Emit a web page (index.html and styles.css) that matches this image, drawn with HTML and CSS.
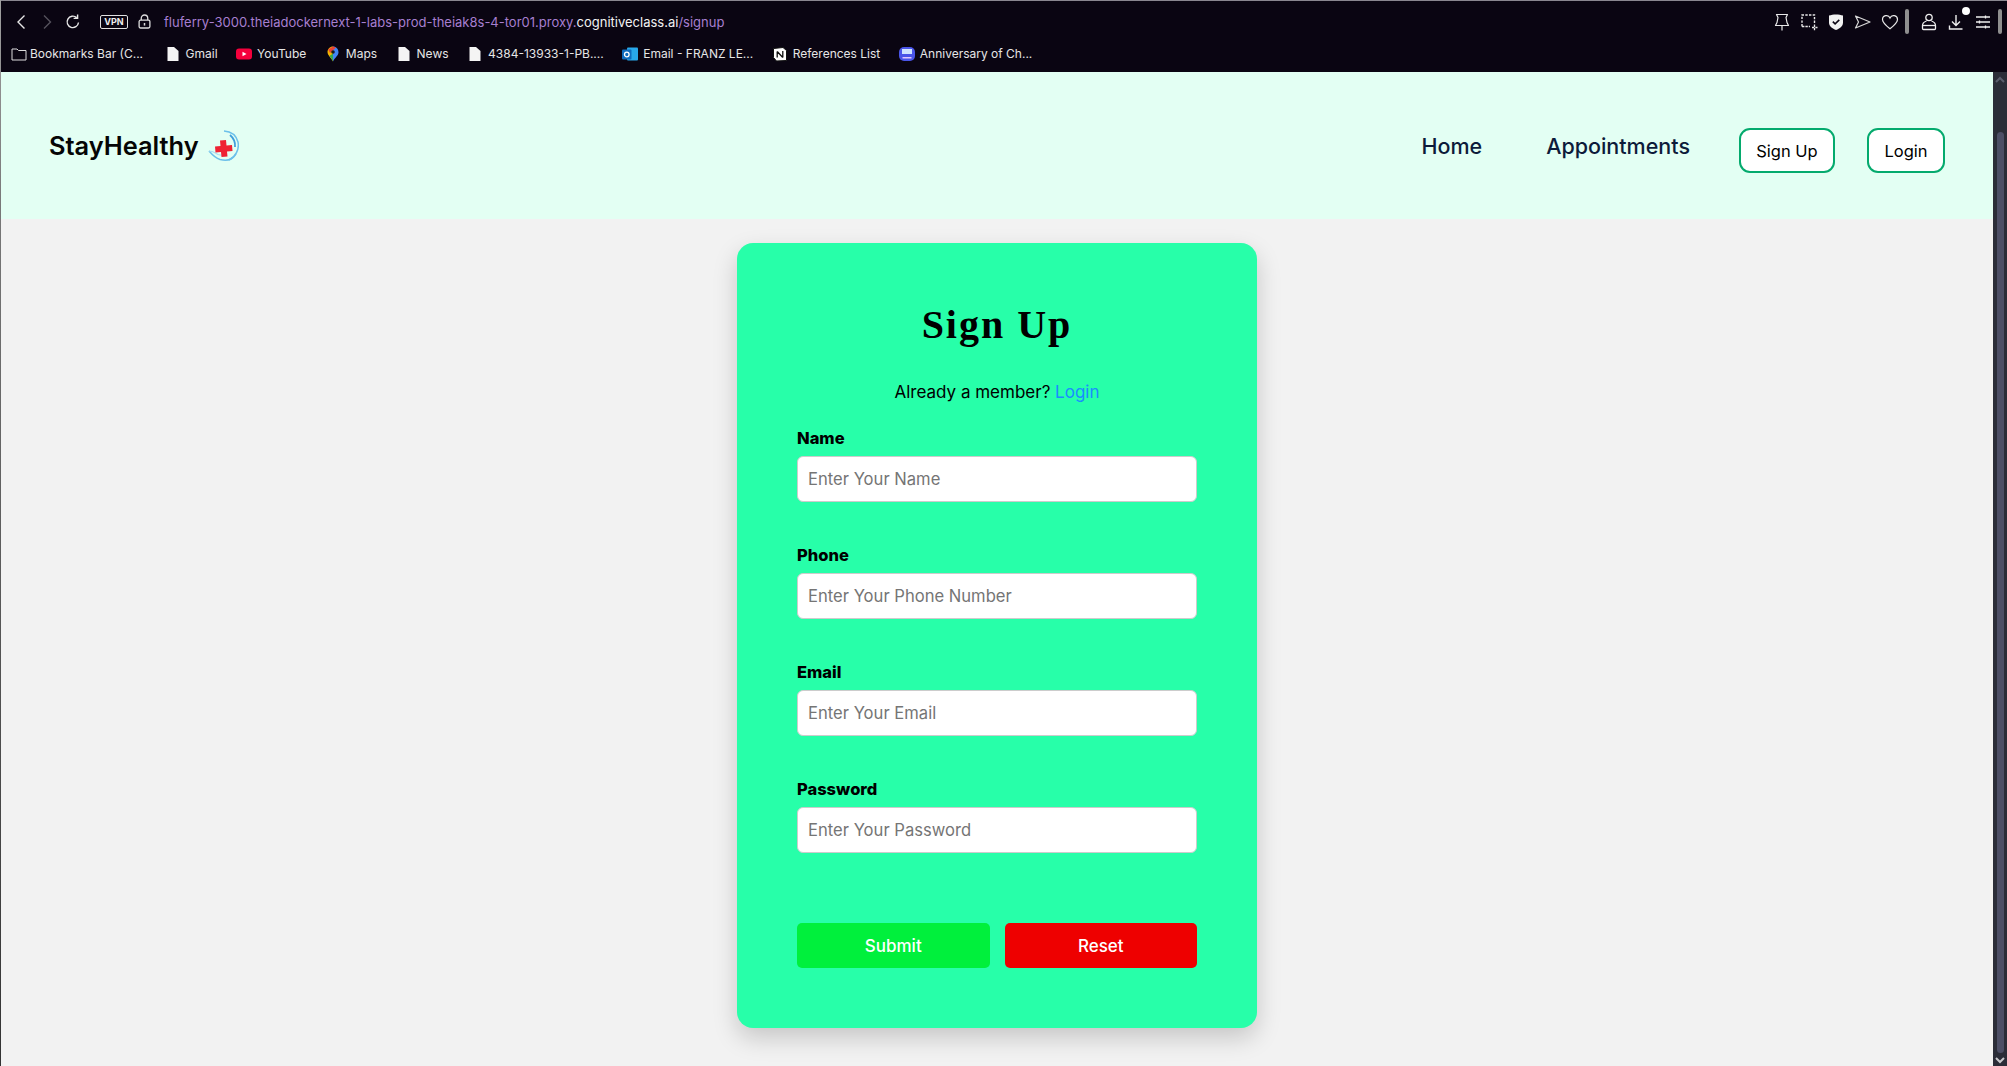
FILE: index.html
```html
<!DOCTYPE html>
<html lang="en">
<head>
    <meta charset="UTF-8">
    <meta name="viewport" content="width=device-width, initial-scale=1.0">
    <title>Sign Up - StayHealthy</title>
    <link rel="stylesheet" href="styles.css">
</head>
<body>
    <div class="browser">
        <div class="toolbar">
            <div class="tool-left">
                <svg class="tb-icon" viewBox="0 0 20 20"><path d="M13.500 3.500 7 10l6.500 6.500" fill="none" stroke="#e8e8e8" stroke-width="1.400"/></svg>
                <svg class="tb-icon" viewBox="0 0 20 20"><path d="M7 3.500 13.500 10 7 16.500" fill="none" stroke="#55525c" stroke-width="1.400"/></svg>
                <svg class="tb-icon" viewBox="0 0 20 20"><path d="M15.500 10.500A5.700 5.700 0 1 1 13.600 5.600M14.600 2.400v4h-4" fill="none" stroke="#e8e8e8" stroke-width="1.400"/></svg>
                <span class="vpn">VPN</span>
                <svg class="lock" viewBox="0 0 14 16"><path d="M3.500 6.500V4.500a3.500 3.500 0 0 1 7 0v2" fill="none" stroke="#ddd" stroke-width="1.400"/><rect x="1.200" y="6.600" width="11.600" height="8.400" rx="1.500" fill="none" stroke="#ddd" stroke-width="1.400"/><rect x="6.200" y="9.600" width="1.600" height="2.800" fill="#ddd"/></svg>
                <span class="url">fluferry-3000.theiadockernext-1-labs-prod-theiak8s-4-tor01.proxy.<b class="url-domain">cognitiveclass.ai</b>/signup</span>
            </div>
            <div class="tool-right">
                <svg class="tr-icon" viewBox="0 0 18 18"><path d="M3.500 1.500h11l-1.500 3L14 9.500l1.500 3h-13l1.500-3 1-5zM9 12.500v5" fill="none" stroke="#e8e8e8" stroke-width="1.200" stroke-linejoin="round"/></svg>
                <svg class="tr-icon" viewBox="0 0 18 18"><path d="M2 13.500V2h12.500v9" fill="none" stroke="#e8e8e8" stroke-width="1.400" stroke-dasharray="2.400 1.300"/><path d="M2 13.500h8M12 14.500h5.500M14.500 11.500v6" fill="none" stroke="#e8e8e8" stroke-width="1.300" stroke-dasharray="2.400 1"/></svg>
                <svg class="tr-icon" viewBox="0 0 18 18"><path d="M2 2.500C6 1 12 1 16 2.500v7c0 4-3.500 6-7 7.500-3.500-1.500-7-3.500-7-7.500z" fill="#f2f2f2"/><path d="m5.800 8.600 2.300 2.300 4.200-4" fill="none" stroke="#0a0512" stroke-width="1.500"/></svg>
                <svg class="tr-icon" viewBox="0 0 18 18"><path d="M1.500 3 16 9 1.500 15 4.500 9z" fill="none" stroke="#d8d8d8" stroke-width="1.200" stroke-linejoin="round"/></svg>
                <svg class="tr-icon" viewBox="0 0 18 18"><path d="M9 15.800C4 11.800 1.500 9.500 1.500 6.500A3.900 3.900 0 0 1 9 5a3.900 3.900 0 0 1 7.500 1.500c0 3-2.500 5.300-7.500 9.300z" fill="none" stroke="#e8e8e8" stroke-width="1.200"/></svg>
                <span class="tb-sep"></span>
                <svg class="tr-icon" viewBox="0 0 18 18"><circle cx="9" cy="4.500" r="3.200" fill="none" stroke="#eee" stroke-width="1.300"/><path d="M6.500 8C3.500 9 2.500 10.500 2.500 12.500v3a1 1 0 0 0 1 1h11a1 1 0 0 0 1-1v-3C15.500 10.500 14.500 9 11.500 8" fill="none" stroke="#eee" stroke-width="1.300"/><path d="M3 12.500h12" stroke="#eee" stroke-width="1.300"/></svg>
                <span class="download">
                    <svg class="tr-icon" viewBox="0 0 18 18"><path d="M9 2v10M5 8.500l4 4 4-4M2.500 12.500v3.500h13" fill="none" stroke="#eee" stroke-width="1.400"/></svg>
                    <span class="download-dot"></span>
                </span>
                <svg class="tr-icon tr-icon-last" viewBox="0 0 18 18"><path d="M2 4h14M2 9h14M2 14h14M11.500 2.400v3.200M5.500 7.400v3.200M11.500 12.400v3.200" fill="none" stroke="#eee" stroke-width="1.300"/></svg>
                <span class="tb-sep"></span>
            </div>
        </div>
        <div class="bookmarks">
            <a class="bm bm-first"><svg class="bm-icon" viewBox="0 0 16 16"><path d="M1 3h5l1.500 1.500H15v9.500H1z" fill="none" stroke="#ddd" stroke-width="1"/></svg>Bookmarks Bar (C...</a>
            <a class="bm"><svg class="bm-icon" viewBox="0 0 16 16"><path d="M2.500 1h6.500L13.500 5v10h-11z" fill="#f4f4f4"/></svg>Gmail</a>
            <a class="bm"><svg class="bm-icon" viewBox="0 0 16 16"><rect y="2.500" width="16" height="11" rx="3" fill="#f5003c"/><path d="M6.500 5.800 10.500 8l-4 2.200z" fill="#fff"/></svg>YouTube</a>
            <a class="bm"><svg class="bm-icon" viewBox="0 0 16 16"><path d="M8 .5C4.800.5 2.500 3 2.500 6c0 3.500 4 6 5.500 9.500z" fill="#f4b400"/><path d="M8 .5c3.200 0 5.500 2.500 5.500 6 0 3-4 5.500-5.500 9z" fill="#4285f4"/><path d="M3.200 3.500 8 .5l3 1-6 5.500z" fill="#ea4335"/><path d="M8 15.500C7 13 5.500 11.500 4.500 10L8 7.500z" fill="#34a853"/><circle cx="8" cy="6" r="1.800" fill="#1a1a1a"/></svg>Maps</a>
            <a class="bm"><svg class="bm-icon" viewBox="0 0 16 16"><path d="M2.500 1h6.500L13.500 5v10h-11z" fill="#f4f4f4"/></svg>News</a>
            <a class="bm"><svg class="bm-icon" viewBox="0 0 16 16"><path d="M2.500 1h6.500L13.500 5v10h-11z" fill="#f4f4f4"/></svg>4384-13933-1-PB....</a>
            <a class="bm"><svg class="bm-icon" viewBox="0 0 16 16"><rect x="5" y="1.500" width="11" height="13" rx="1" fill="#28a8ea"/><rect x="0" y="3.500" width="9.500" height="10" rx="1" fill="#0f6cbd"/><circle cx="4.800" cy="8.500" r="2.300" fill="none" stroke="#fff" stroke-width="1.300"/></svg>Email - FRANZ LE...</a>
            <a class="bm"><svg class="bm-icon" viewBox="0 0 16 16"><path d="M1.500 2.500 11 1.500l3.500 3v10l-10 .500-3-3.500z" fill="#fff" stroke="#111" stroke-width="1"/><path d="M5.200 5.500v6M5.200 5.500l5.600 6M10.800 5v6.500" fill="none" stroke="#111" stroke-width="1.300"/></svg>References List</a>
            <a class="bm"><svg class="bm-icon" viewBox="0 0 16 16"><rect y="1" width="16" height="14" rx="5" fill="#4a55e8"/><rect x="3" y="3" width="10" height="5" fill="#cfe4ff"/><rect x="3.500" y="11" width="9" height="1.500" fill="#e0c8ff"/></svg>Anniversary of Ch...</a>
        </div>
    </div>

    <div class="viewport">
        <div class="page">
            <header class="navbar">
                <div class="brand">
                    <span>StayHealthy</span>
                    <svg class="brand-logo" viewBox="0 0 31 31">
                        <path d="M16 1c7 .5 12 3.500 14 11 1.500 7.500-2.500 15-9 18" fill="none" stroke="#6cc0ea" stroke-width="1.500"/>
                        <path d="M22 5c3.500 3 5.500 7 5 12" fill="none" stroke="#3f9fdc" stroke-width="1.800"/>
                        <path d="M1 21c3 3.500 6 7 11 8.500 4 1 8 1 11-.5 2.500-1.500 4-3 5-5" fill="none" stroke="#6cc0ea" stroke-width="1.500"/>
                        <path d="M1 21c4 0 6 2 9 3.500 3 1 6 1 9 0" fill="none" stroke="#a8dcf2" stroke-width="1.200"/>
                        <path d="M12 10.500l6-.5.500 5.500 5.500-.5.500 6-5.500.5.500 5-6 .5-.5-5-5.500.5-.5-6 5.500-.5z" fill="#ee2233"/>
                    </svg>
                </div>
                <nav class="nav-menu">
                    <a class="nav-link">Home</a>
                    <a class="nav-link">Appointments</a>
                    <a class="nav-btn nav-btn-signup">Sign Up</a>
                    <a class="nav-btn nav-btn-login">Login</a>
                </nav>
            </header>

            <main class="content">
                <div class="signup-card">
                    <h1>Sign Up</h1>
                    <p class="member-note">Already a member? <a class="login-link">Login</a></p>
                    <form class="signup-form">
                        <div class="form-group">
                            <label for="name">Name</label>
                            <input id="name" type="text" placeholder="Enter Your Name">
                        </div>
                        <div class="form-group">
                            <label for="phone">Phone</label>
                            <input id="phone" type="tel" placeholder="Enter Your Phone Number">
                        </div>
                        <div class="form-group">
                            <label for="email">Email</label>
                            <input id="email" type="email" placeholder="Enter Your Email">
                        </div>
                        <div class="form-group">
                            <label for="password">Password</label>
                            <input id="password" type="password" placeholder="Enter Your Password">
                        </div>
                        <div class="btn-group">
                            <button type="button" class="btn btn-submit">Submit</button>
                            <button type="reset" class="btn btn-reset">Reset</button>
                        </div>
                    </form>
                </div>
            </main>
        </div>
        <div class="scrollbar">
            <svg class="scroll-arrow" viewBox="0 0 14 10"><path d="M3 7l4-4 4 4" fill="none" stroke="#5a5d6c" stroke-width="2"/></svg>
            <div class="scroll-thumb"></div>
            <svg class="scroll-arrow" viewBox="0 0 14 10"><path d="M3 3l4 4 4-4" fill="none" stroke="#c8c8cc" stroke-width="2"/></svg>
        </div>
    </div>
</body>
</html>
```

FILE: styles.css
```css
* {
    box-sizing: border-box;
}
html, body {
    height: 100%;
}
body {
    margin: 0;
    font-family: Inter, "Liberation Sans", sans-serif;
    background-color: #f2f2f2;
    display: flex;
    flex-direction: column;
    overflow: hidden;
    border-left: 1px solid;
    border-image: linear-gradient(#a0a0a0, #777 20%, #333) 1;
}
.browser {
    height: 72px;
    flex: none;
    background: #0a0512;
    border-top: 1px solid #8a8790;
    color: #e6e6e6;
}
.toolbar {
    height: 41px;
    display: flex;
    justify-content: space-between;
    align-items: center;
    padding: 0 5px 0 10px;
}
.tool-left, .tool-right {
    display: flex;
    align-items: center;
}
.tb-icon {
    width: 20px;
    height: 20px;
    margin-right: 6px;
}
.vpn {
    margin-left: 11px;
    font-size: 9px;
    font-weight: 700;
    line-height: 10px;
    padding: 1px 0;
    border: 1px solid #e0e0e0;
    border-radius: 2px;
    color: #eee;
    width: 28px;
    text-align: center;
}
.lock {
    width: 13px;
    height: 15px;
    margin-left: 10px;
}
.url {
    margin-left: 13px;
    font-size: 13px;
    color: #a77fd0;
}
.url-domain {
    font-weight: 400;
    color: #f2f2f2;
}
.tr-icon {
    width: 18px;
    height: 18px;
    margin-right: 9px;
    display: block;
}
.tr-icon-last {
    margin-right: 6px;
}
.tb-sep {
    width: 4px;
    height: 25px;
    background: #8f8f8f;
    border-radius: 2px;
    margin: 0 11px 0 -3px;
}
.tool-right .tb-sep:last-child {
    margin: 0;
}
.download {
    position: relative;
}
.download-dot {
    position: absolute;
    top: -6px;
    right: 4px;
    width: 8px;
    height: 8px;
    border-radius: 50%;
    background: #fff;
}
.bookmarks {
    height: 30px;
    display: flex;
    align-items: flex-start;
    padding: 2px 0 0 10px;
    font-size: 12px;
    gap: 18.500px;
}
.bm {
    display: flex;
    align-items: center;
    gap: 5px;
    white-space: nowrap;
    line-height: 20px;
}
.bm-first {
    gap: 3px;
    margin-right: 3px;
}
.bm-icon {
    width: 16px;
    height: 16px;
}
.viewport {
    flex: 1;
    display: flex;
    min-height: 0;
}
.page {
    flex: 1;
    min-width: 0;
}
.scrollbar {
    width: 14px;
    background: #2b2d38;
    display: flex;
    flex-direction: column;
    justify-content: space-between;
    padding: 3px 0 1px;
    position: relative;
}
.scroll-arrow {
    width: 14px;
    height: 10px;
    display: block;
}
.scroll-thumb {
    position: absolute;
    top: 60px;
    left: 4px;
    width: 7px;
    height: 921px;
    background: #4d4f66;
    border-radius: 4px;
}

/* navbar */
.navbar {
    height: 147px;
    background: #e3fff3;
    display: flex;
    justify-content: space-between;
    align-items: center;
    padding: 0 48px 0 48px;
}
.brand {
    display: flex;
    align-items: center;
    gap: 9px;
    font-size: 25.400px;
    font-weight: 600;
    color: #050505;
}
.brand-logo {
    width: 31px;
    height: 31px;
}
.nav-menu {
    display: flex;
    align-items: center;
}
.nav-link {
    font-size: 21.500px;
    font-weight: 500;
    color: #0d1b3a;
    margin-right: 64px;
}
.nav-link:nth-child(2) {
    margin-right: 49px;
}
.nav-btn {
    height: 45px;
    border: 2px solid #04aa6d;
    border-radius: 11px;
    background: #fff;
    color: #000;
    font-size: 16.500px;
    display: flex;
    align-items: center;
    justify-content: center;
    margin-top: 10px;
}
.nav-btn-signup {
    width: 96px;
    margin-right: 32px;
}
.nav-btn-login {
    width: 78px;
}

/* card */
.content {
    display: flex;
    justify-content: center;
    padding-top: 24px;
}
.signup-card {
    width: 520px;
    height: 785px;
    background: #27ffa9;
    border-radius: 16px;
    padding: 59px 60px 60px;
    box-shadow: 0 10px 24px rgba(0, 0, 0, 0.18);
}
h1 {
    margin: 0 0 32px;
    font-family: "Liberation Serif", serif;
    font-size: 40px;
    font-weight: 700;
    line-height: 46px;
    letter-spacing: 2px;
    text-align: center;
    color: #000;
}
.member-note {
    margin: 0 0 22px;
    font-size: 17px;
    line-height: 24px;
    text-align: center;
    color: #000;
}
.login-link {
    color: #1a8cff;
}
.form-group {
    height: 117px;
}
.form-group label {
    display: block;
    font-size: 16.500px;
    font-weight: 800;
    line-height: 24px;
    margin-bottom: 6px;
    color: #000;
}
.form-group input {
    display: block;
    width: 100%;
    height: 46px;
    padding: 0 10px;
    border: 1px solid #ccc;
    border-radius: 6px;
    font-family: inherit;
    font-size: 16.600px;
    background: #fff;
}
.form-group input::placeholder {
    color: #757575;
}
.btn-group {
    display: flex;
    gap: 15px;
    margin-top: 29px;
}
.btn {
    flex: 1;
    height: 45px;
    border: none;
    border-radius: 5px;
    color: #fff;
    font-family: inherit;
    font-size: 17px;
    font-weight: 500;
}
.btn-submit {
    background: #00f03c;
}
.btn-reset {
    background: #ee0000;
}
```
